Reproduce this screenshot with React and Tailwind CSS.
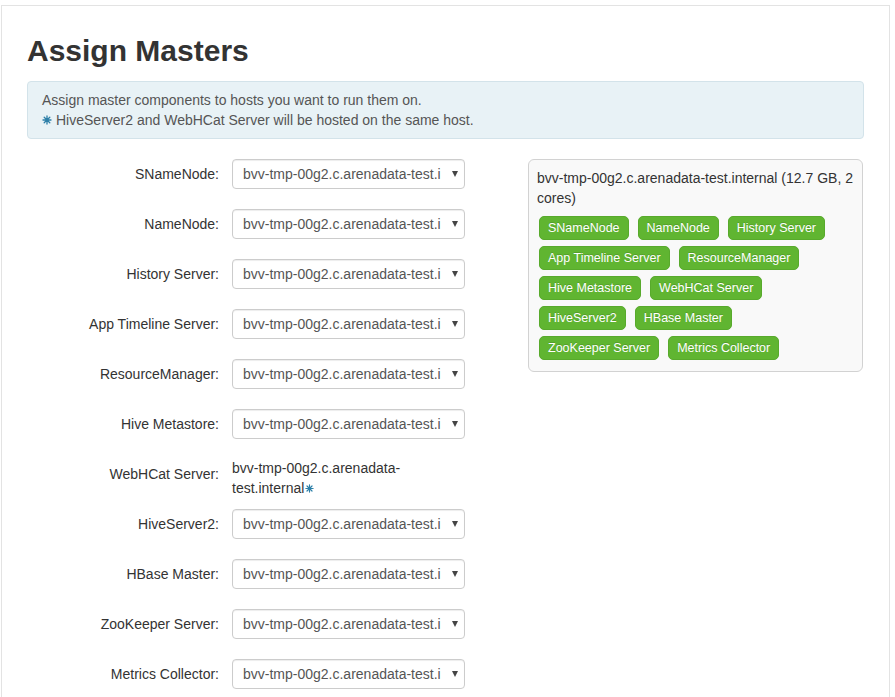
import React from "react";

const HOST = "bvv-tmp-00g2.c.arenadata-test.internal";

const rows = [
  "SNameNode",
  "NameNode",
  "History Server",
  "App Timeline Server",
  "ResourceManager",
  "Hive Metastore",
  "WebHCat Server",
  "HiveServer2",
  "HBase Master",
  "ZooKeeper Server",
  "Metrics Collector",
];

const badges = [
  "SNameNode",
  "NameNode",
  "History Server",
  "App Timeline Server",
  "ResourceManager",
  "Hive Metastore",
  "WebHCat Server",
  "HiveServer2",
  "HBase Master",
  "ZooKeeper Server",
  "Metrics Collector",
];

/* glyphicon-style asterisk, 8 spokes */
function Star({ className = "" }) {
  return (
    <svg viewBox="0 0 10 10" className={className} fill="none" stroke="currentColor" strokeWidth="1.3" strokeLinecap="round">
      <path d="M5 1v8M1 5h8M2.2 2.2l5.6 5.6M7.8 2.2L2.2 7.8" />
    </svg>
  );
}

function FakeSelect() {
  return (
    <div className="w-[233px] h-[30px] flex items-center border border-[#cccccc] rounded bg-white pl-[10px] pr-[6px] shadow-[inset_0_1px_1px_rgba(0,0,0,0.075)]">
      <span className="w-[198px] overflow-hidden whitespace-nowrap text-[14px] text-[#555555]">{HOST}</span>
      <span className="ml-auto w-0 h-0 border-l-[3.5px] border-r-[3.5px] border-t-[6px] border-l-transparent border-r-transparent border-t-[#444444]" />
    </div>
  );
}

export default function App() {
  return (
    <div className="min-h-screen bg-white pt-[5px] pl-[1px]" style={{ fontFamily: '"Liberation Sans", Arial, sans-serif' }}>
      <div className="w-[889px] border border-[#e3e3e3] px-[25px] pb-10 text-[#333333]">
        {/* Header */}
        <h2 className="mt-[28px] mb-[14px] text-[30px] leading-[33px] font-bold">Assign Masters</h2>

        {/* Info */}
        <div className="border border-[#d3e3ea] bg-[#e8f2f6] rounded px-[14px] py-2 text-[14px] leading-5 text-[#555555]">
          <div>Assign master components to hosts you want to run them on.</div>
          <div className="flex items-center">
            <Star className="w-[10px] h-[10px] mr-[4px] text-[#2c7fa8]" />
            HiveServer2 and WebHCat Server will be hosted on the same host.
          </div>
        </div>

        <div className="flex mt-5">
          {/* Form */}
          <div className="w-[438px]">
            {rows.map((name) => (
              <div key={name} className="flex h-[30px] mb-5">
                <div className="w-[192px] flex items-center justify-end text-[14px] text-[#333333]">{name}:</div>
                <div className="ml-[13px]">
                  {name === "WebHCat Server" ? (
                    <div className="w-[200px] -mt-[1px] text-[14px] leading-5 text-[#333333]">
                      bvv-tmp-00g2.c.arenadata-
                      <br />
                      <span className="inline-flex items-center">
                        test.internal
                        <Star className="w-[9px] h-[9px] ml-[1px] text-[#2c7fa8]" />
                      </span>
                    </div>
                  ) : (
                    <FakeSelect />
                  )}
                </div>
              </div>
            ))}
          </div>

          {/* Host panel */}
          <div className="ml-[63px] w-[335px] self-start border border-[#d2d2d2] rounded-md bg-[#f9f9f9] px-2 pt-2 pb-[11px]">
            <div className="text-[14px] leading-5 text-[#333333]">
              {HOST} (12.7 GB, 2 cores)
            </div>
            <div className="flex flex-wrap gap-x-[9px] gap-y-[6px] mt-2 pl-[2px]">
              {badges.map((b) => (
                <span
                  key={b}
                  className="h-6 pl-[8px] pr-[8px] flex items-center rounded-[5px] bg-[#60b531] border border-[#58aa2c] text-white text-[12.5px] [text-shadow:0_-1px_0_rgba(0,0,0,0.15)]"
                >
                  {b}
                </span>
              ))}
            </div>
          </div>
        </div>
      </div>
    </div>
  );
}
